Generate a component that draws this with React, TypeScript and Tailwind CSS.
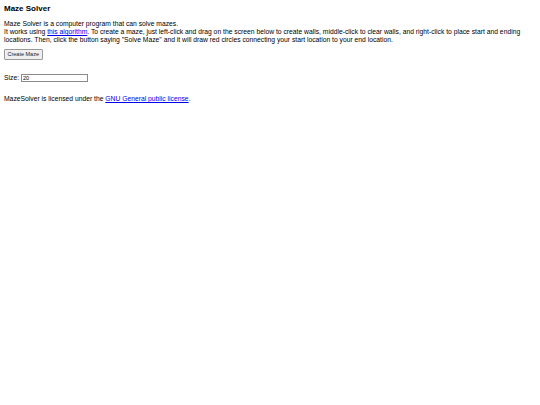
export default function App() {
  return (
    <div className="min-h-[405px] w-[540px] bg-white px-[4px] pt-[4px] text-[6.75px] leading-[1.15] text-black" style={{ fontFamily: '"Liberation Sans", Arial, sans-serif' }}>
      <h3 className="text-[8px] font-bold leading-[1.15]">Maze Solver</h3>
      <p className="mt-[7px]">
        Maze Solver is a computer program that can solve mazes.
        <br />
        It works using{" "}
        <a href="#" className="text-[#0000ee] underline">this algorithm</a>. To create a maze, just left-click and drag on the screen below to create walls, middle-click to clear walls, and right-click to place start and ending locations. Then, click the button saying "Solve Maze" and it will draw red circles connecting your start location to your end location.
      </p>
      <div className="mt-[6px]">
        <button className="rounded-[1px] border border-[#9a9a9a] bg-[#efefef] px-[2.5px] py-[1px] text-[5.5px] leading-[1.15] text-[#222]">Create Maze</button>
      </div>
      <div className="mt-[14px] flex items-center">
        <span>Size:&nbsp;</span>
        <input defaultValue="20" className="h-[8px] w-[67px] border border-[#8a8a8a] px-[1px] text-[5.5px] outline-none" />
      </div>
      <p className="mt-[13.5px]">
        MazeSolver is licensed under the{" "}
        <a href="#" className="text-[#0000ee] underline">GNU General public license</a>.
      </p>
    </div>
  );
}
